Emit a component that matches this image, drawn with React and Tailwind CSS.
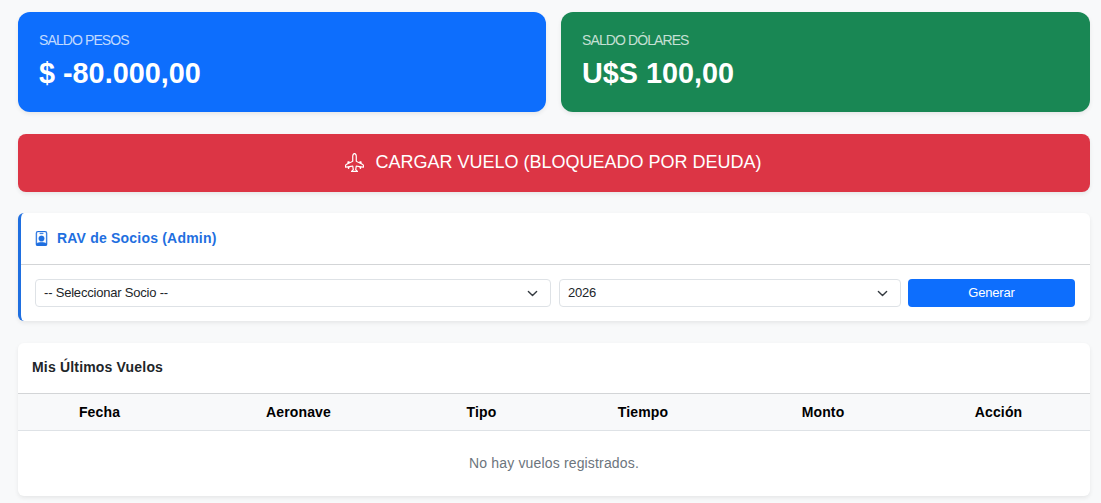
import React from 'react';
import { BsAirplaneEngines, BsPersonBadge } from 'react-icons/bs';

const columns = [
  { label: 'Fecha', className: 'w-[163px]' },
  { label: 'Aeronave', className: 'w-[235px]' },
  { label: 'Tipo', className: 'w-[131px]' },
  { label: 'Tiempo', className: 'w-[192px]' },
  { label: 'Monto', className: 'w-[168px]' },
  { label: 'Acción', className: 'flex-1' },
];

const BalanceCard = ({ label, amount, color }) => (
  <div className={`h-[100px] rounded-[12px] px-[21px] pt-[20px] text-white shadow-[0_2px_4px_rgba(0,0,0,0.075)] ${color}`}>
    <div className="text-[14px] leading-[17px] tracking-[-0.9px] text-white/75">{label}</div>
    <div className="mt-[7px] text-[28.8px] leading-[35px] font-bold">{amount}</div>
  </div>
);

const Select = ({ value, className }) => (
  <div className={`flex h-[28px] items-center justify-between rounded-[4px] border border-[#dee2e6] bg-white pr-[12px] pl-[8px] ${className}`}>
    <span className="text-[13px] tracking-[-0.2px] text-[#212529]">{value}</span>
    <svg width="11" height="11" viewBox="0 0 16 16" fill="none" stroke="#343a40" strokeWidth="2" strokeLinecap="round" strokeLinejoin="round">
      <path d="m2 5 6 6 6-6" />
    </svg>
  </div>
);

export default function App() {
  return (
    <div className="min-h-[503px] bg-[#f8f9fa] pt-[12px] pr-[11px] pl-[18px] font-['Liberation_Sans',Arial,sans-serif]">
      <div className="grid grid-cols-[528px_529px] gap-[15px]">
        <BalanceCard label="SALDO PESOS" amount="$ -80.000,00" color="bg-[#0d6efd]" />
        <BalanceCard label="SALDO DÓLARES" amount="U$S 100,00" color="bg-[#198754]" />
      </div>

      <button className="mt-[22px] flex h-[58px] w-full items-center justify-center gap-[11px] rounded-[8px] bg-[#dc3545] pr-[1px] pb-[2px] text-[18px] text-white shadow-[0_2px_4px_rgba(0,0,0,0.075)]">
        <BsAirplaneEngines size={19} />
        <span>CARGAR VUELO (BLOQUEADO POR DEUDA)</span>
      </button>

      <div className="mt-[21px] overflow-hidden rounded-[6px] border-l-[3px] border-[#1f6fe0] bg-white shadow-[0_2px_4px_rgba(0,0,0,0.075)]">
        <div className="flex h-[52px] items-center gap-[8px] border-b border-[#d3d5d7] pl-[13px]">
          <BsPersonBadge size={15} stroke="currentColor" strokeWidth={0.3} className="text-[#1f6fe0]" />
          <span className="text-[14px] font-bold tracking-[0.2px] text-[#1f6fe0]">RAV de Socios (Admin)</span>
        </div>
        <div className="flex h-[56px] items-center pr-[15px] pl-[14px]">
          <Select value="-- Seleccionar Socio --" className="mr-[8px] w-[516px]" />
          <Select value="2026" className="mr-[7px] w-[342px]" />
          <button className="h-[28px] flex-1 rounded-[4px] bg-[#0d6efd] text-[13px] tracking-[-0.2px] text-white">Generar</button>
        </div>
      </div>

      <div className="mt-[22px] overflow-hidden rounded-[6px] bg-white shadow-[0_2px_4px_rgba(0,0,0,0.075)]">
        <div className="flex h-[51px] items-center border-b border-[#d3d5d7] pb-[2px] pl-[14px]">
          <span className="text-[14px] font-bold tracking-[0.18px] text-[#212529]">Mis Últimos Vuelos</span>
        </div>
        <div className="flex h-[37px] items-center border-b border-[#dee2e6] bg-[#f8f9fa]">
          {columns.map(col => (
            <div key={col.label} className={`text-center text-[14px] font-bold tracking-[0.15px] text-black ${col.className}`}>
              {col.label}
            </div>
          ))}
        </div>
        <div className="flex h-[65px] items-center justify-center text-[14px] tracking-[0.16px] text-[#6c757d]">
          No hay vuelos registrados.
        </div>
      </div>
    </div>
  );
}
